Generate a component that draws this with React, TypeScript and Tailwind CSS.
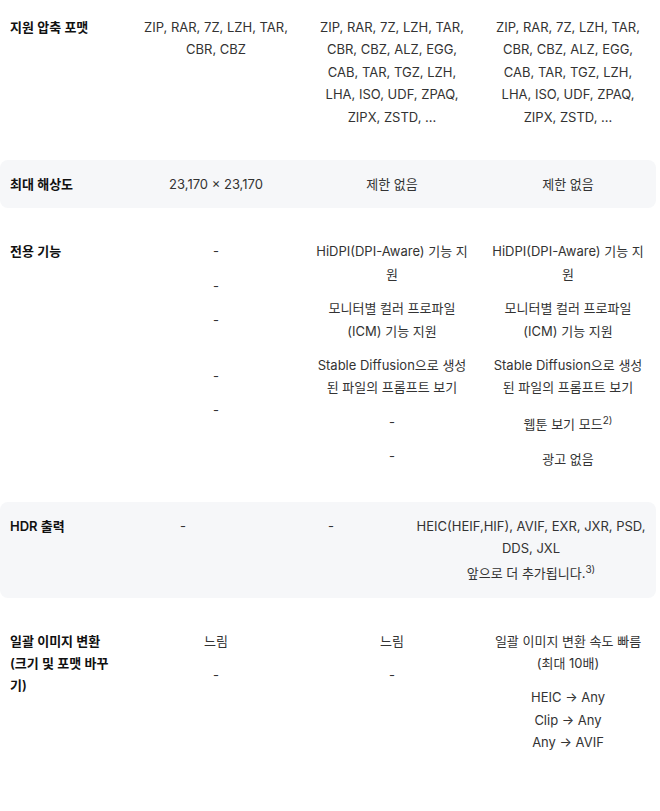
const font = { fontFamily: '"Inter", "Noto Sans CJK KR", sans-serif' }

const cols = 'grid grid-cols-[128px_176px_176px_176px]'

function Label({ children }: { children: React.ReactNode }) {
  return <div className="pl-2.5 pr-2 font-semibold text-[#111]">{children}</div>
}

function Cell({ children }: { children: React.ReactNode }) {
  return <div className="px-2 text-center">{children}</div>
}

function Note({ children }: { children: React.ReactNode }) {
  return <sup className="static align-super text-[10px] leading-[19px]">{children}</sup>
}

export default function App() {
  return (
    <div
      style={font}
      className="w-[656px] pt-1 pb-8 flex flex-col gap-5 text-[13px] leading-[22.4px] text-[#333] bg-white"
    >
      {/* 지원 압축 포맷 */}
      <div className={`${cols} py-3`}>
        <Label>지원 압축 포맷</Label>
        <Cell>ZIP, RAR, 7Z, LZH, TAR, CBR, CBZ</Cell>
        <Cell>ZIP, RAR, 7Z, LZH, TAR, CBR, CBZ, ALZ, EGG, CAB, TAR, TGZ, LZH, LHA, ISO, UDF, ZPAQ, ZIPX, ZSTD, ...</Cell>
        <Cell>ZIP, RAR, 7Z, LZH, TAR, CBR, CBZ, ALZ, EGG, CAB, TAR, TGZ, LZH, LHA, ISO, UDF, ZPAQ, ZIPX, ZSTD, ...</Cell>
      </div>

      {/* 최대 해상도 */}
      <div className={`${cols} py-[13px] rounded-lg bg-[#f6f7f9]`}>
        <Label>최대 해상도</Label>
        <Cell>23,170 × 23,170</Cell>
        <Cell>제한 없음</Cell>
        <Cell>제한 없음</Cell>
      </div>

      {/* 전용 기능 */}
      <div className={`${cols} py-3`}>
        <Label>전용 기능</Label>
        <Cell>
          <p>-</p>
          <p className="mt-3">-</p>
          <p className="mt-3">-</p>
          <p className="mt-[33px]">-</p>
          <p className="mt-3">-</p>
        </Cell>
        <Cell>
          <div className="flex flex-col gap-3">
            <p>HiDPI(DPI-Aware) 기능 지원</p>
            <p>모니터별 컬러 프로파일 (ICM) 기능 지원</p>
            <p>Stable Diffusion으로 생성된 파일의 프롬프트 보기</p>
            <p>-</p>
            <p>-</p>
          </div>
        </Cell>
        <Cell>
          <div className="flex flex-col gap-3">
            <p>HiDPI(DPI-Aware) 기능 지원</p>
            <p>모니터별 컬러 프로파일 (ICM) 기능 지원</p>
            <p>Stable Diffusion으로 생성된 파일의 프롬프트 보기</p>
            <p>
              웹툰 보기 모드<Note>2)</Note>
            </p>
            <p>광고 없음</p>
          </div>
        </Cell>
      </div>

      {/* HDR 출력 */}
      <div className="grid grid-cols-[110px_146px_150px_1fr] py-[13px] rounded-lg bg-[#f6f7f9]">
        <Label>HDR 출력</Label>
        <Cell>-</Cell>
        <Cell>-</Cell>
        <div className="px-1 text-center">
          <p>HEIC(HEIF,HIF), AVIF, EXR, JXR, PSD, DDS, JXL</p>
          <p>
            앞으로 더 추가됩니다.<Note>3)</Note>
          </p>
        </div>
      </div>

      {/* 일괄 이미지 변환 */}
      <div className={`${cols} py-3`}>
        <Label>일괄 이미지 변환 (크기 및 포맷 바꾸기)</Label>
        <Cell>
          <p>느림</p>
          <p className="mt-3">-</p>
        </Cell>
        <Cell>
          <p>느림</p>
          <p className="mt-3">-</p>
        </Cell>
        <Cell>
          <p>일괄 이미지 변환 속도 빠름 (최대 10배)</p>
          <p className="mt-3">
            HEIC → Any
            <br />
            Clip → Any
            <br />
            Any → AVIF
          </p>
        </Cell>
      </div>
    </div>
  )
}
